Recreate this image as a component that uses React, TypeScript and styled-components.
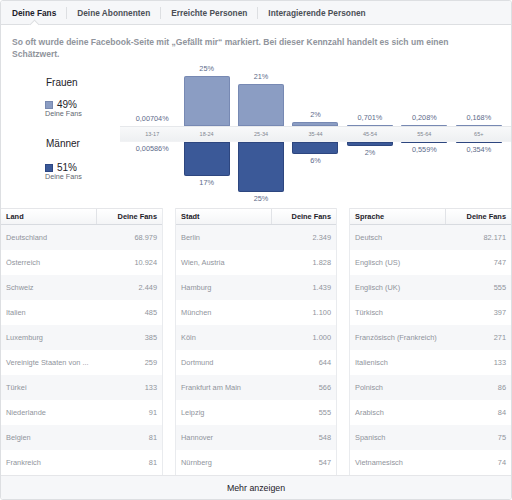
import React from 'react';
import styled, { createGlobalStyle } from 'styled-components';

const Global = createGlobalStyle`
  html, body { margin: 0; padding: 0; background: #fff; }
  body { font-family: "Liberation Sans", Arial, Helvetica, sans-serif; }
`;

const Frame = styled.div`
  width: 512px;
  height: 500px;
  box-sizing: border-box;
  border: 1px solid #dddfe2;
  border-radius: 3px;
  overflow: hidden;
  display: flex;
  flex-direction: column;
  background: #fff;
`;

const TabBar = styled.div`
  position: relative;
  display: flex;
  align-items: center;
  height: 24px;
  box-sizing: border-box;
  background: #f6f7f9;
  border-bottom: 1px solid #dddfe2;
  padding-left: 1px;
`;

const Tab = styled.div<{ $active?: boolean }>`
  padding: 0 10px;
  font-size: 8.3px;
  line-height: 12px;
  font-weight: bold;
  color: ${p => (p.$active ? '#1d2129' : '#4b4f56')};
  & + & { border-left: 1px solid #dddfe2; }
`;

const Notch = styled.span`
  position: absolute;
  left: 30px;
  bottom: -4px;
  width: 6px;
  height: 6px;
  background: #fff;
  border-top: 1px solid #dddfe2;
  border-left: 1px solid #dddfe2;
  transform: rotate(45deg);
`;

const Description = styled.p`
  margin: 0;
  padding: 11px 30px 0 11px;
  font-size: 8.55px;
  line-height: 12px;
  font-weight: bold;
  color: #90949c;
`;

const ChartRow = styled.div`
  display: flex;
  height: 148px;
`;

const Legend = styled.div`
  width: 119px;
  flex: none;
  box-sizing: border-box;
  padding-left: 44px;
  display: flex;
  flex-direction: column;
`;

const SexTitle = styled.div<{ $mt: number }>`
  margin-top: ${p => p.$mt}px;
  padding-left: 1px;
  font-size: 10px;
  line-height: 12px;
  color: #1d2129;
`;

const ShareRow = styled.div<{ $mt: number }>`
  margin-top: ${p => p.$mt}px;
  display: flex;
  align-items: center;
  gap: 4px;
  font-size: 10px;
  line-height: 10px;
  color: #1d2129;
`;

const Swatch = styled.span<{ $tone: 'f' | 'm' }>`
  width: 8px;
  height: 8px;
  box-sizing: border-box;
  background: ${p => (p.$tone === 'f' ? '#8b9dc3' : '#3b5998')};
  border: 1px solid ${p => (p.$tone === 'f' ? '#7889b0' : '#2d4784')};
`;

const Caption = styled.div`
  font-size: 7.2px;
  line-height: 8px;
  color: #616770;
`;

const Plot = styled.div`
  flex: 1;
  display: flex;
  flex-direction: column;
`;

const BarRow = styled.div<{ $up?: boolean }>`
  height: 66px;
  padding: 0 5px;
  display: grid;
  grid-template-columns: repeat(7, 1fr);
  align-items: ${p => (p.$up ? 'end' : 'start')};
`;

const Column = styled.div<{ $up?: boolean }>`
  display: flex;
  flex-direction: column;
  align-items: center;
  justify-content: ${p => (p.$up ? 'flex-end' : 'flex-start')};
`;

const ValueLabel = styled.div<{ $up?: boolean }>`
  font-size: 7.3px;
  line-height: 9px;
  color: #5d6b8a;
  margin: ${p => (p.$up ? '0 0 3px' : '2px 0 0')};
`;

const Bar = styled.div<{ $tone: 'f' | 'm' }>`
  width: 46px;
  box-sizing: border-box;
  background: ${p => (p.$tone === 'f' ? '#8b9dc3' : '#3b5998')};
  box-shadow: inset 0 0 0 1px ${p => (p.$tone === 'f' ? 'rgba(60,80,130,0.25)' : 'rgba(20,35,80,0.35)')};
  border-radius: ${p => (p.$tone === 'f' ? '2px 2px 0 0' : '0 0 2px 2px')};
`;

const Band = styled.div`
  height: 16px;
  box-sizing: border-box;
  padding: 0 5px;
  display: grid;
  grid-template-columns: repeat(7, 1fr);
  align-items: center;
  background: linear-gradient(#f8f9fa, #eef0f2);
  border-top: 1px solid #e6e8eb;
  border-bottom: 1px solid #f1f2f4;
`;

const AgeLabel = styled.div`
  text-align: center;
  font-size: 5.5px;
  line-height: 8px;
  color: #7f8590;
`;

const Tables = styled.div`
  display: grid;
  grid-template-columns: repeat(3, 1fr);
  column-gap: 12px;
`;

const Table = styled.div`
  border-left: 1px solid #e9ebee;
  border-right: 1px solid #e9ebee;
  &:first-child { border-left: none; }
  &:last-child { border-right: none; }
`;

const HeadRow = styled.div`
  display: grid;
  grid-template-columns: 95px 1fr;
  height: 17px;
  box-sizing: border-box;
  background: linear-gradient(#ffffff, #f4f5f7);
  border-top: 1px solid #e5e6e9;
  border-bottom: 1px solid #d8dbe0;
`;

const HeadCell = styled.div<{ $num?: boolean }>`
  display: flex;
  align-items: center;
  justify-content: ${p => (p.$num ? 'flex-end' : 'flex-start')};
  padding: 0 5px;
  font-size: 7.4px;
  font-weight: bold;
  color: #1d2129;
  ${p => (p.$num ? 'border-left: 1px solid #e1e3e7;' : '')}
`;

const Row = styled.div<{ $shade: boolean }>`
  display: grid;
  grid-template-columns: 95px 1fr;
  height: 25px;
  align-items: center;
  background: ${p => (p.$shade ? '#f6f7f9' : '#ffffff')};
  font-size: 7.4px;
  color: #90949c;
`;

const Cell = styled.div<{ $num?: boolean }>`
  padding: 0 5px;
  white-space: nowrap;
  overflow: hidden;
  text-overflow: ellipsis;
  text-align: ${p => (p.$num ? 'right' : 'left')};
`;

const Footer = styled.div`
  flex: 1;
  display: flex;
  align-items: center;
  justify-content: center;
  background: #f6f7f9;
  border-top: 1px solid #e5e6e9;
  font-size: 8.8px;
  color: #1d2129;
`;

type Age = { label: string; f: number; fl: string; m: number; ml: string };

const ages: Age[] = [
  { label: '13-17', f: 0.00704, fl: '0,00704%', m: 0.00586, ml: '0,00586%' },
  { label: '18-24', f: 25, fl: '25%', m: 17, ml: '17%' },
  { label: '25-34', f: 21, fl: '21%', m: 25, ml: '25%' },
  { label: '35-44', f: 2, fl: '2%', m: 6, ml: '6%' },
  { label: '45-54', f: 0.701, fl: '0,701%', m: 2, ml: '2%' },
  { label: '55-64', f: 0.208, fl: '0,208%', m: 0.559, ml: '0,559%' },
  { label: '65+', f: 0.168, fl: '0,168%', m: 0.354, ml: '0,354%' },
];

const barHeight = (pct: number) => {
  if (pct < 0.1) return 0;
  return Math.max(1, Math.round(pct * 2));
};

type TableData = { title: string; rows: [string, string][] };

const tables: TableData[] = [
  {
    title: 'Land',
    rows: [
      ['Deutschland', '68.979'],
      ['Österreich', '10.924'],
      ['Schweiz', '2.449'],
      ['Italien', '485'],
      ['Luxemburg', '385'],
      ['Vereinigte Staaten von ...', '259'],
      ['Türkei', '133'],
      ['Niederlande', '91'],
      ['Belgien', '81'],
      ['Frankreich', '81'],
    ],
  },
  {
    title: 'Stadt',
    rows: [
      ['Berlin', '2.349'],
      ['Wien, Austria', '1.828'],
      ['Hamburg', '1.439'],
      ['München', '1.100'],
      ['Köln', '1.000'],
      ['Dortmund', '644'],
      ['Frankfurt am Main', '566'],
      ['Leipzig', '555'],
      ['Hannover', '548'],
      ['Nürnberg', '547'],
    ],
  },
  {
    title: 'Sprache',
    rows: [
      ['Deutsch', '82.171'],
      ['Englisch (US)', '747'],
      ['Englisch (UK)', '555'],
      ['Türkisch', '397'],
      ['Französisch (Frankreich)', '271'],
      ['Italienisch', '133'],
      ['Polnisch', '86'],
      ['Arabisch', '84'],
      ['Spanisch', '75'],
      ['Vietnamesisch', '74'],
    ],
  },
];

export default function App() {
  return (
    <>
      <Global />
      <Frame>
        <TabBar>
          <Tab $active>Deine Fans</Tab>
          <Tab>Deine Abonnenten</Tab>
          <Tab>Erreichte Personen</Tab>
          <Tab>Interagierende Personen</Tab>
          <Notch />
        </TabBar>
        <Description>
          So oft wurde deine Facebook-Seite mit „Gefällt mir“ markiert. Bei dieser Kennzahl handelt es sich um einen
          Schätzwert.
        </Description>
        <ChartRow>
          <Legend>
            <SexTitle $mt={17}>Frauen</SexTitle>
            <ShareRow $mt={11}>
              <Swatch $tone="f" />
              49%
            </ShareRow>
            <Caption>Deine Fans</Caption>
            <SexTitle $mt={20}>Männer</SexTitle>
            <ShareRow $mt={13}>
              <Swatch $tone="m" />
              51%
            </ShareRow>
            <Caption>Deine Fans</Caption>
          </Legend>
          <Plot>
            <BarRow $up>
              {ages.map(a => (
                <Column $up key={a.label}>
                  <ValueLabel $up>{a.fl}</ValueLabel>
                  <Bar $tone="f" style={{ height: barHeight(a.f) }} />
                </Column>
              ))}
            </BarRow>
            <Band>
              {ages.map(a => (
                <AgeLabel key={a.label}>{a.label}</AgeLabel>
              ))}
            </Band>
            <BarRow>
              {ages.map(a => (
                <Column key={a.label}>
                  <Bar $tone="m" style={{ height: barHeight(a.m) }} />
                  <ValueLabel>{a.ml}</ValueLabel>
                </Column>
              ))}
            </BarRow>
          </Plot>
        </ChartRow>
        <Tables>
          {tables.map(t => (
            <Table key={t.title}>
              <HeadRow>
                <HeadCell>{t.title}</HeadCell>
                <HeadCell $num>Deine Fans</HeadCell>
              </HeadRow>
              {t.rows.map(([name, val], i) => (
                <Row key={name} $shade={i % 2 === 0}>
                  <Cell>{name}</Cell>
                  <Cell $num>{val}</Cell>
                </Row>
              ))}
            </Table>
          ))}
        </Tables>
        <Footer>Mehr anzeigen</Footer>
      </Frame>
    </>
  );
}
